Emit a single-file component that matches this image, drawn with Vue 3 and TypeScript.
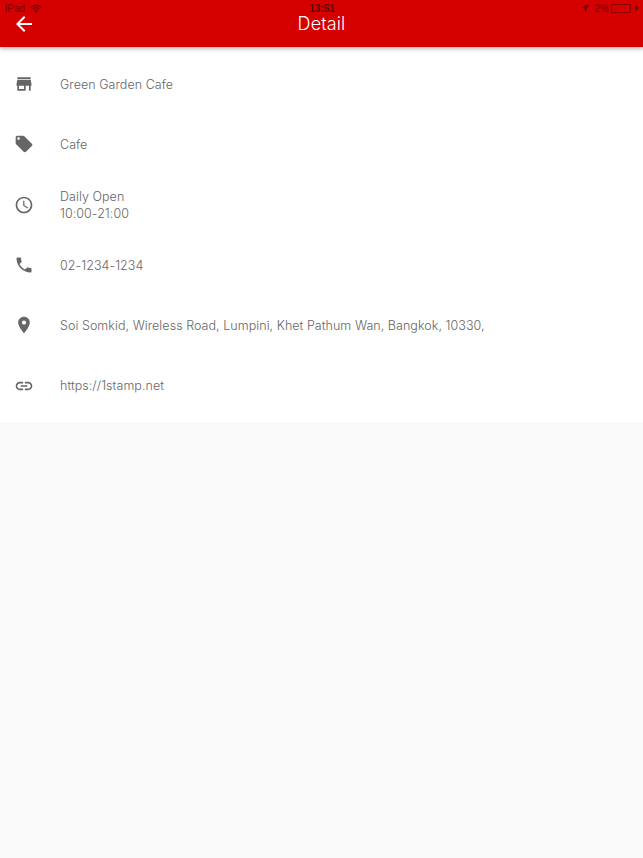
<template>
  <div class="page">
    <header class="app-bar">
      <div class="status-bar">
        <div class="status-left">
          <span>iPad</span>
          <svg width="12" height="9" viewBox="0 0 12 9" class="wifi">
            <path d="M0.8 3.4C3.7 0.6 8.3 0.6 11.2 3.4" />
            <path d="M2.7 5.2C4.6 3.4 7.4 3.4 9.3 5.2" />
            <path d="M4.5 7C5.4 6.2 6.6 6.2 7.5 7" />
            <circle cx="6" cy="8" r="0.9" />
          </svg>
        </div>
        <span class="status-time">13:51</span>
        <div class="status-right">
          <svg width="8" height="8" viewBox="0 0 8 8" class="dark-fill">
            <path d="M8 0 0 3.6 3.6 4.4 4.4 8Z" />
          </svg>
          <span class="percent">2%</span>
          <span class="battery"></span>
          <svg width="5" height="8" viewBox="0 0 5 8" class="dark-fill">
            <path d="M3 0 0 4.6H2L1.6 8 5 3.2H3Z" />
          </svg>
        </div>
      </div>
      <div class="toolbar">
        <svg class="back" width="24" height="24" viewBox="0 0 24 24">
          <path d="M20 11H7.83l5.59-5.59L12 4l-8 8 8 8 1.41-1.41L7.83 13H20v-2z" />
        </svg>
        <h1>Detail</h1>
      </div>
    </header>

    <main class="list">
      <div v-for="row in rows" :key="row.icon" class="row">
        <svg class="icon" width="20" height="20" viewBox="0 0 24 24">
          <path :d="row.icon" />
        </svg>
        <div class="text">
          <div v-for="line in row.lines" :key="line">{{ line }}</div>
        </div>
      </div>
    </main>
  </div>
</template>

<script setup lang="ts">
interface Row {
  icon: string
  lines: string[]
}

const rows: Row[] = [
  {
    icon: 'M20 4H4v2h16V4zm1 10v-2l-1-5H4l-1 5v2h1v6h10v-6h4v6h2v-6h1zm-9 4H6v-4h6v4z',
    lines: ['Green Garden Cafe']
  },
  {
    icon: 'M21.41 11.58l-9-9C12.05 2.22 11.55 2 11 2H4c-1.1 0-2 .9-2 2v7c0 .55.22 1.05.59 1.42l9 9c.36.36.86.58 1.41.58.55 0 1.05-.22 1.41-.59l7-7c.37-.36.59-.86.59-1.41 0-.55-.23-1.06-.59-1.42zM5.5 7C4.67 7 4 6.33 4 5.5S4.67 4 5.5 4 7 4.67 7 5.5 6.33 7 5.5 7z',
    lines: ['Cafe']
  },
  {
    icon: 'M11.99 2C6.47 2 2 6.48 2 12s4.47 10 9.99 10C17.52 22 22 17.52 22 12S17.52 2 11.99 2zM12 20c-4.42 0-8-3.58-8-8s3.58-8 8-8 8 3.58 8 8-3.58 8-8 8zm.5-13H11v6l5.25 3.15.75-1.23-4.5-2.67V7z',
    lines: ['Daily Open', '10:00-21:00']
  },
  {
    icon: 'M6.62 10.79c1.44 2.83 3.76 5.14 6.59 6.59l2.2-2.2c.27-.27.67-.36 1.02-.24 1.12.37 2.33.57 3.57.57.55 0 1 .45 1 1V20c0 .55-.45 1-1 1-9.39 0-17-7.61-17-17 0-.55.45-1 1-1h3.5c.55 0 1 .45 1 1 0 1.25.2 2.45.57 3.57.11.35.03.74-.25 1.02l-2.2 2.2z',
    lines: ['02-1234-1234']
  },
  {
    icon: 'M12 2C8.13 2 5 5.13 5 9c0 5.25 7 13 7 13s7-7.75 7-13c0-3.87-3.13-7-7-7zm0 9.5c-1.38 0-2.5-1.12-2.5-2.5s1.12-2.5 2.5-2.5 2.5 1.12 2.5 2.5-1.12 2.5-2.5 2.5z',
    lines: ['Soi Somkid, Wireless Road, Lumpini, Khet Pathum Wan, Bangkok, 10330,']
  },
  {
    icon: 'M3.9 12c0-1.71 1.39-3.1 3.1-3.1h4V7H7c-2.76 0-5 2.24-5 5s2.24 5 5 5h4v-1.9H7c-1.71 0-3.1-1.39-3.1-3.1zM8 13h8v-2H8v2zm9-6h-4v1.9h4c1.71 0 3.1 1.39 3.1 3.1s-1.39 3.1-3.1 3.1h-4V17h4c2.76 0 5-2.24 5-5s-2.24-5-5-5z',
    lines: ['https://1stamp.net']
  }
]
</script>

<style>
html,
body {
  background: #fafafa;
}
</style>

<style scoped>
.page {
  min-height: 858px;
  background: #fafafa;
  font-family: Inter, "Liberation Sans", sans-serif;
}

.app-bar {
  position: relative;
  height: 47px;
  background: #d50000;
  box-shadow: 0 2px 4px rgba(0, 0, 0, 0.28);
  color: #fff;
}

.status-bar {
  height: 15px;
  padding: 1px 4px 0 5px;
  box-sizing: border-box;
  display: grid;
  grid-template-columns: 1fr auto 1fr;
  align-items: center;
  font-family: "Liberation Sans", sans-serif;
  font-size: 10px;
  line-height: 11px;
  color: #7a0000;
}

.status-left {
  display: flex;
  align-items: center;
  gap: 5px;
}

.wifi {
  fill: #7a0000;
  stroke: #7a0000;
}

.wifi path {
  fill: none;
  stroke-width: 1.3;
}

.wifi circle {
  stroke: none;
}

.status-time {
  font-weight: 700;
  color: #600000;
}

.status-right {
  display: flex;
  align-items: center;
  justify-content: flex-end;
  gap: 2px;
}

.percent {
  margin-left: 4px;
}

.battery {
  width: 18px;
  height: 7px;
  border: 1px solid #8a0000;
  border-radius: 1px;
  margin-right: 1px;
}

.dark-fill {
  fill: #7a0000;
}

.toolbar {
  position: relative;
  height: 18px;
  display: flex;
  align-items: center;
  justify-content: center;
}

.toolbar h1 {
  margin: 0;
  font-size: 18px;
  font-weight: 300;
  line-height: 18px;
  letter-spacing: 0.1px;
}

.back {
  position: absolute;
  left: 12px;
  top: -3px;
  fill: #fff;
}

.list {
  background: #fff;
  padding: 7px 0 6px;
}

.row {
  height: 60.33px;
  display: flex;
  align-items: center;
  gap: 26px;
  padding-left: 14px;
}

.icon {
  flex: none;
  fill: #666;
}

.text {
  font-size: 12.5px;
  font-weight: 300;
  line-height: 17px;
  letter-spacing: 0.05px;
  color: #666;
}
</style>
